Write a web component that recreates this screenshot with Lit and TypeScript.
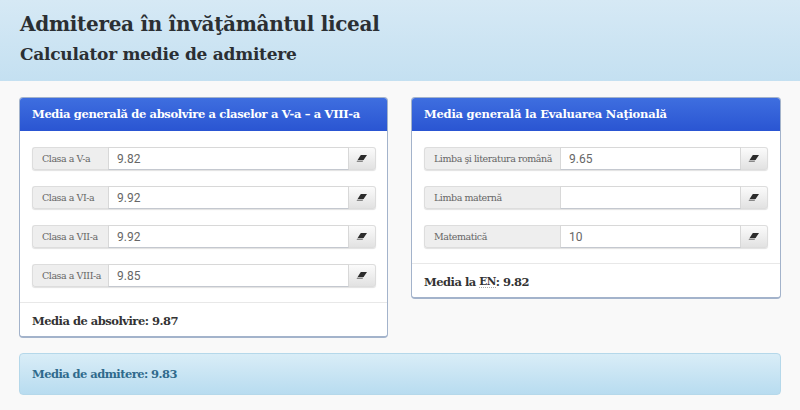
import { LitElement, html, css } from 'lit';
import { customElement } from 'lit/decorators.js';

const eraser = html`<svg width="12" height="9" viewBox="0 0 12 9">
  <path d="M4.8 1H11L7.6 6H1.6Z" fill="#2b2b2b"></path>
  <path d="M1.2 6.6H7.2L6.6 8H0.6Z" fill="#888"></path>
</svg>`;

@customElement('app-root')
export class AppRoot extends LitElement {
  static styles = css`
    :host {
      display: block;
      width: 800px;
      height: 410px;
      overflow: hidden;
      background: #f9f9f9;
      font-family: Roboto, sans-serif;
      color: #333;
    }
    .top {
      height: 81px;
      box-sizing: border-box;
      padding: 10px 19px 0 20px;
      background: linear-gradient(#d6e9f5, #c4e0f1);
      font-family: "DejaVu Serif", "Liberation Serif", serif;
      font-weight: bold;
      color: #2b2f33;
    }
    h1 {
      margin: 0;
      font-size: 20px;
      line-height: 28px;
      letter-spacing: -0.3px;
    }
    h2 {
      margin: 3px 0 0;
      font-size: 17px;
      line-height: 26px;
      letter-spacing: -0.25px;
    }
    .cols {
      display: grid;
      grid-template-columns: 369px 370px;
      gap: 23px;
      align-items: start;
      padding: 16px 19px 0;
    }
    .panel {
      background: #fff;
      border: 1px solid #a3b3cb;
      border-bottom-width: 2px;
      border-radius: 4px;
      box-sizing: border-box;
      overflow: hidden;
    }
    .head {
      height: 34px;
      margin: -1px -1px 0;
      padding: 0 13px;
      display: flex;
      align-items: center;
      background: linear-gradient(#3f6fe0, #2a55d2);
      color: #fff;
      font-family: "DejaVu Serif", "Liberation Serif", serif;
      font-weight: bold;
      font-size: 11.5px;
      letter-spacing: -0.22px;
      white-space: nowrap;
    }
    .head.tight {
      letter-spacing: -0.34px;
    }
    .body {
      padding: 16px 12px 15px;
      display: flex;
      flex-direction: column;
      gap: 16px;
    }
    .body.wide {
      padding-right: 11px;
    }
    .group {
      display: flex;
      height: 23px;
      border-radius: 3px;
      box-shadow: 0 1px 1px rgba(0, 0, 0, 0.12);
    }
    .label {
      box-sizing: border-box;
      flex: none;
      display: flex;
      align-items: center;
      padding-left: 9px;
      background: #eee;
      border: 1px solid #ddd;
      border-right: none;
      border-radius: 3px 0 0 3px;
      color: #666;
      font-family: "DejaVu Serif", "Liberation Serif", serif;
      font-size: 9.5px;
      letter-spacing: -0.45px;
      white-space: nowrap;
    }
    input {
      flex: 1;
      min-width: 0;
      box-sizing: border-box;
      border: 1px solid #d8d8d8;
      border-bottom-color: #c4c8cf;
      outline: none;
      padding: 0 8px;
      background: #fff;
      color: #666;
      font-family: Roboto, sans-serif;
      font-size: 12px;
    }
    button {
      flex: none;
      width: 27px;
      padding: 0;
      display: flex;
      align-items: center;
      justify-content: center;
      border: 1px solid #ddd;
      border-left: none;
      border-radius: 0 3px 3px 0;
      background: linear-gradient(#fbfbfb, #e2e2e2);
    }
    .foot {
      box-sizing: border-box;
      border-top: 1px solid #e8e8e8;
      padding: 2px 12px 0;
      height: 34px;
      display: flex;
      align-items: center;
      font-family: "DejaVu Serif", "Liberation Serif", serif;
      font-weight: bold;
      font-size: 11.5px;
      letter-spacing: -0.5px;
      color: #333;
      white-space: pre;
    }
    .abbr {
      border-bottom: 1px dotted #aaa;
      font-size: 10.5px;
    }
    .alert {
      margin: 15px 19px 0;
      height: 42px;
      box-sizing: border-box;
      padding: 0 12px;
      display: flex;
      align-items: center;
      border: 1px solid #b5d8ea;
      border-radius: 4px;
      background: linear-gradient(#d9edf7, #b8dcf0);
      color: #2f6a8c;
      font-family: "DejaVu Serif", "Liberation Serif", serif;
      font-weight: bold;
      font-size: 11.5px;
      letter-spacing: -0.55px;
    }
  `;

  private renderRow(label: string, value: string, width: number) {
    return html`<div class="group">
      <span class="label" style="width:${width}px">${label}</span>
      <input type="text" .value=${value} />
      <button type="button">${eraser}</button>
    </div>`;
  }

  render() {
    return html`
      <div class="top">
        <h1>Admiterea în învăţământul liceal</h1>
        <h2>Calculator medie de admitere</h2>
      </div>
      <div class="cols">
        <section class="panel">
          <div class="head tight">Media generală de absolvire a claselor a V-a – a VIII-a</div>
          <div class="body wide">
            ${this.renderRow('Clasa a V-a', '9.82', 76)}
            ${this.renderRow('Clasa a VI-a', '9.92', 76)}
            ${this.renderRow('Clasa a VII-a', '9.92', 76)}
            ${this.renderRow('Clasa a VIII-a', '9.85', 76)}
          </div>
          <div class="foot">Media de absolvire: 9.87</div>
        </section>
        <section class="panel">
          <div class="head">Media generală la Evaluarea Naţională</div>
          <div class="body">
            ${this.renderRow('Limba şi literatura română', '9.65', 136)}
            ${this.renderRow('Limba maternă', '', 136)}
            ${this.renderRow('Matematică', '10', 136)}
          </div>
          <div class="foot">Media la <span class="abbr">EN</span>: 9.82</div>
        </section>
      </div>
      <div class="alert">Media de admitere: 9.83</div>
    `;
  }
}
